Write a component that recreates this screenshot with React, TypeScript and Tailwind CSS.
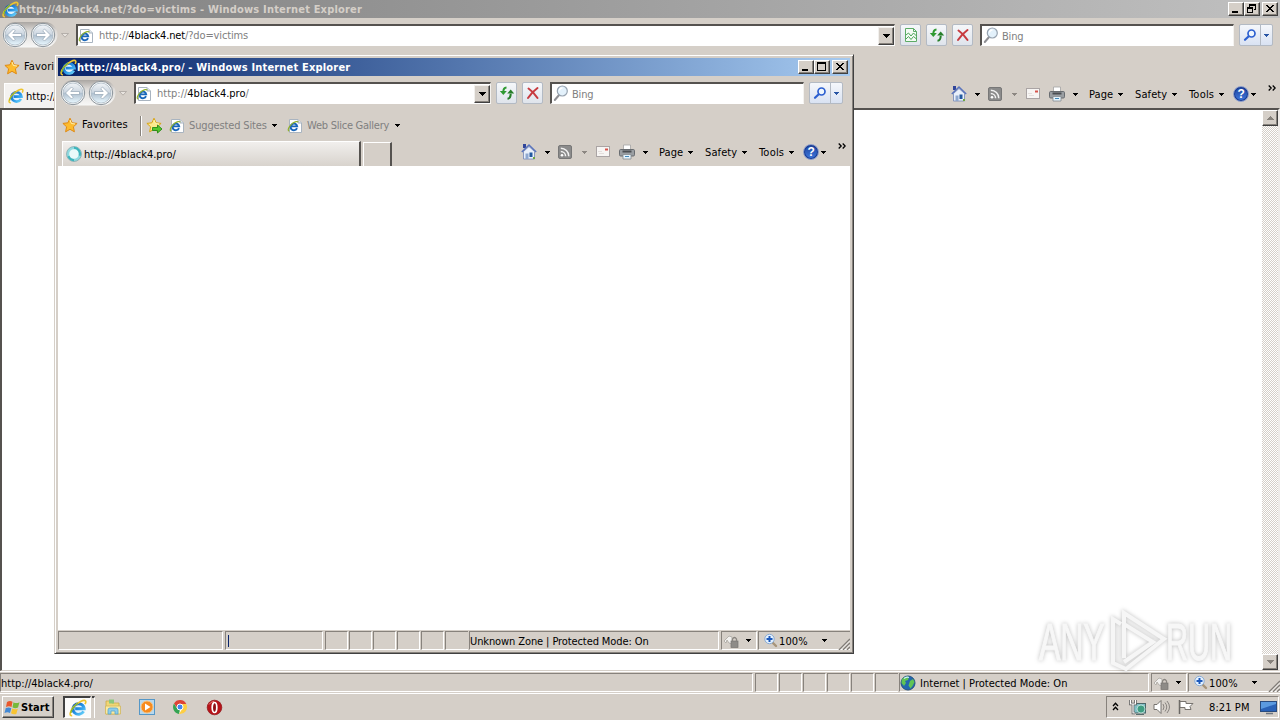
import React from 'react';

const Arrow = ({ className = 'text-black' }: { className?: string }) => (
  <svg width="5" height="3" viewBox="0 0 5 3" className={`shrink-0 ${className}`} shapeRendering="crispEdges">
    <path d="M0 0h5v1h-1v1h-1v1h-1v-1h-1v-1h-1z" fill="currentColor" />
  </svg>
);

const IeLogo = ({ size = 16 }: { size?: number }) => (
  <svg width={size} height={size} viewBox="0 0 16 16" className="shrink-0">
    <defs>
      <linearGradient id="ieBlue" x1="0" y1="0" x2="1" y2="1">
        <stop offset="0" stopColor="#1556ae" />
        <stop offset=".5" stopColor="#2592e6" />
        <stop offset="1" stopColor="#6ed6fb" />
      </linearGradient>
    </defs>
    <ellipse cx="8.500" cy="8.500" rx="4.500" ry="4.500" fill="#e4f3fc" />
    <path d="M13 11A5 4.700 0 1 1 13.500 8.600H5.500" fill="none" stroke="url(#ieBlue)" strokeWidth="2.600" />
    <path d="M2.800 14.800C.2 15.200 .4 11.500 4 7.200C7.800 2.900 13.500 .2 14.700 1.800C15.200 2.500 14.800 3.600 14.200 4.600" fill="none" stroke="#edc531" strokeWidth="1.500" />
    <path d="M1.800 12.500C1.800 10.200 4.600 6.200 7.800 3.700" fill="none" stroke="#6fb52c" strokeWidth="1" />
  </svg>
);

const IePage = () => (
  <svg width="16" height="16" viewBox="0 0 16 16" className="shrink-0">
    <path d="M2.500 1.500h8.500l3.500 3.500v9.500h-12z" fill="#fff" stroke="#a9b4c0" />
    <path d="M11 1.500V5h3.500" fill="#dfe6ee" stroke="#a9b4c0" />
    <path d="M10 10.200A3.300 3.300 0 1 1 10.200 8.400H4.500" fill="none" stroke="#1a67ba" strokeWidth="1.900" />
    <path d="M2.300 13C-.2 12.800 2 8.300 5.200 5.600C8 3.500 10.800 2.900 11.200 4.200" fill="none" stroke="#8fb02c" strokeWidth="1.200" />
  </svg>
);

const Star = ({ add = false }: { add?: boolean }) => (
  <svg width="17" height="17" viewBox="0 0 17 17" className="shrink-0">
    <path
      d="M8 1.200l2.100 4.600 5 .6-3.700 3.400 1 5L8 12.300l-4.400 2.500 1-5L.9 6.400l5-.6z"
      fill={add ? '#fbe98d' : '#fdbb2d'}
      stroke={add ? '#d9a514' : '#e08a12'}
      strokeWidth="1"
      strokeLinejoin="round"
    />
    <path d="M8 3l1.400 3.500 3.600.5" fill="none" stroke="#fff2b0" strokeWidth="1" />
    {add && <path d="M6.500 10.500h5v-2.500l4.500 4-4.500 4v-2.500h-5z" fill="#55c62d" stroke="#258a18" strokeWidth=".9" />}
  </svg>
);

const NavButtons = () => (
  <svg width="56" height="28" viewBox="0 0 56 28" className="shrink-0">
    <defs>
      <linearGradient id="navFill" x1="0" y1="0" x2="0" y2="1">
        <stop offset="0" stopColor="#f2f5f8" />
        <stop offset=".46" stopColor="#ccd6e0" />
        <stop offset=".52" stopColor="#b0c0cf" />
        <stop offset="1" stopColor="#e9f8ff" />
      </linearGradient>
      <linearGradient id="navRim" x1="0" y1="0" x2="0" y2="1">
        <stop offset="0" stopColor="#aaa6a2" />
        <stop offset=".35" stopColor="#dedbd8" />
        <stop offset="1" stopColor="#f8f8f7" />
      </linearGradient>
    </defs>
    <rect x=".5" y="1" width="55" height="25.500" rx="12.700" fill="url(#navRim)" />
    {[13, 41].map((cx) => (
      <g key={cx}>
        <circle cx={cx} cy="14" r="11.700" fill="#f8fafb" stroke="#7d878f" strokeWidth=".9" />
        <circle cx={cx} cy="14" r="10" fill="url(#navFill)" stroke="#a3b1bd" strokeWidth=".7" />
      </g>
    ))}
    <path d="M5.500 14l6-6 1.800 1.800-2.500 2.700h8.700v3h-8.700l2.500 2.700-1.800 1.800z" fill="#fff" stroke="#93a5b5" strokeWidth=".7" />
    <path d="M48.500 14l-6-6-1.800 1.800 2.500 2.700h-8.700v3h8.700l-2.500 2.700 1.800 1.800z" fill="#fff" stroke="#93a5b5" strokeWidth=".7" />
  </svg>
);

const Magnifier = ({ color }: { color: string }) => (
  <svg width="16" height="16" viewBox="0 0 16 16" className="shrink-0">
    <path d="M7 9L3 12.800" stroke={color} strokeWidth="2.200" strokeLinecap="round" />
    <circle cx="9.500" cy="6.500" r="3.500" fill="#eef6fd" stroke={color} strokeWidth="1.700" />
  </svg>
);

const SearchGlass = () => (
  <svg width="17" height="17" viewBox="0 0 17 17" className="shrink-0">
    <path d="M6.500 9.500L1.800 15" stroke="#8f8f94" strokeWidth="2" strokeLinecap="round" />
    <circle cx="9.300" cy="6" r="5" fill="#e3f1fb" stroke="#97a3b0" strokeWidth="1.200" />
    <path d="M6.500 5.500a3 3 0 0 1 3-2.500" stroke="#fff" strokeWidth="1.300" fill="none" />
  </svg>
);

const ToolButton = ({ children }: { children: React.ReactNode }) => (
  <div className="flex h-[22px] w-[21px] shrink-0 items-center justify-center rounded-[2px] border border-[#b3bac4] bg-gradient-to-b from-[#f5f7fa] to-[#dfe4ec]">
    {children}
  </div>
);

const CompatIcon = () => (
  <svg width="14" height="16" viewBox="0 0 14 16">
    <path d="M1.500 1.500h8l3 3v10h-11z" fill="#f4fbf4" stroke="#5cab66" />
    <path d="M9.500 1.500v3h3" fill="none" stroke="#5cab66" />
    <path d="M2 8l2.500-2 2.500 3 2.500-3 3 3M2 12l2.500-2.500 2.500 3 2.500-3 3 2.500" fill="none" stroke="#4ba458" />
  </svg>
);

const RefreshIcon = () => (
  <svg width="16" height="16" viewBox="0 0 16 16">
    <path d="M7.500 2.500Q4.300 2.800 4.300 7" fill="none" stroke="#2f9a32" strokeWidth="2" />
    <path d="M.8 6h7l-3.500 4z" fill="#2f9a32" />
    <path d="M8.500 13.800q3.200-.3 3.200-5" fill="none" stroke="#277f2a" strokeWidth="2" />
    <path d="M8.200 8.500h7l-3.500-4z" fill="#277f2a" />
  </svg>
);

const StopIcon = () => (
  <svg width="14" height="14" viewBox="0 0 14 14">
    <path d="M2.500 2.500q5 3.500 9 9.500M11.500 2q-5.500 4-9.500 10" fill="none" stroke="#c73a3f" strokeWidth="2" strokeLinecap="round" />
  </svg>
);

const HomeIcon = () => (
  <svg width="16" height="17" viewBox="0 0 16 17" className="mb-[1px] shrink-0">
    <path d="M2 1h3v4H2z" fill="#30459a" />
    <path d="M2.500 8.500L8 3.500l5.500 5v7.500h-11z" fill="#e9f0fa" stroke="#7285b5" strokeWidth=".8" />
    <path d="M.8 9L8 2l7.200 7" fill="none" stroke="#5a74bd" strokeWidth="1.500" />
    <path d="M4.500 10.500h3V16h-3z" fill="#8ea8d0" />
    <path d="M8.500 9.500h3V14h-3z" fill="#23599f" />
    <path d="M12 14h2v2h-2z" fill="#6ea73d" />
  </svg>
);

const RssIcon = () => (
  <svg width="14" height="14" viewBox="0 0 14 14" className="ml-2 shrink-0">
    <rect x=".5" y=".5" width="13" height="13" rx="1.500" fill="#8b8b8b" stroke="#777" />
    <circle cx="4" cy="10.200" r="1.300" fill="#fff" />
    <path d="M2.800 6.500a4.800 4.800 0 0 1 4.800 4.800M2.800 3.200a8 8 0 0 1 8 8" fill="none" stroke="#f2f2f2" strokeWidth="1.500" />
  </svg>
);

const MailIcon = () => (
  <svg width="14" height="11" viewBox="0 0 14 11" className="mb-[1px] shrink-0">
    <rect x=".5" y=".5" width="13" height="10" fill="#f7f5f3" stroke="#aaa4a4" />
    <path d="M9 2.500h3v2H9z" fill="#d6544c" />
    <path d="M2 5.500h4M3 7.500h5" stroke="#ddd8d6" strokeWidth=".8" />
  </svg>
);

const PrinterIcon = () => (
  <svg width="16" height="16" viewBox="0 0 16 16" className="shrink-0">
    <path d="M4.500 1h7v6h-7z" fill="#fff" stroke="#a3a3a3" strokeWidth=".8" />
    <rect x=".5" y="5.500" width="15" height="6.500" rx="1.200" fill="#9a9ea2" stroke="#686c70" />
    <path d="M3.500 6.500h9v2h-9z" fill="#4b4e52" />
    <path d="M4 10.500h8V15H4z" fill="#e5f3fc" stroke="#868b90" strokeWidth=".8" />
    <path d="M6 12.500h4" stroke="#4489b9" />
  </svg>
);

const HelpIcon = () => (
  <span className="flex h-4 w-4 shrink-0 items-center justify-center rounded-full border border-[#8b9cc8] bg-gradient-to-b from-[#1f459f] to-[#3f78dd] font-['Liberation_Sans'] text-xs leading-none font-bold text-white shadow-[inset_0_0_0_1px_#1b3c92]">
    ?
  </span>
);

const WindowButton = ({ kind }: { kind: 'min' | 'max' | 'restore' | 'close' }) => (
  <div className="flex h-[14px] w-4 shrink-0 items-center justify-center border border-t-white border-r-[#404040] border-b-[#404040] border-l-white bg-[#d5cfc8] shadow-[inset_-1px_-1px_0_#87827c]">
    <svg width="12" height="10" viewBox="0 0 12 10" shapeRendering="crispEdges" stroke="#000" fill="none">
      {kind === 'min' && <path d="M2 8h6" strokeWidth="2" />}
      {kind === 'max' && <path d="M1.500 8.500v-8h8v8zM1 1.500h9" />}
      {kind === 'restore' && <path d="M4 1h6M3.500 3V.5h6v5H8M1 4h6M1.500 8.500v-5h5v5z" />}
      {kind === 'close' && <path d="M2 1l7 7M3 1l7 7M9 1L2 8M10 1L3 8" strokeWidth="1" />}
    </svg>
  </div>
);

const MenuText = ({ label, className }: { label: string; className: string }) => (
  <div className={`flex shrink-0 items-center justify-between ${className}`}>
    <span>{label}</span>
    <Arrow />
  </div>
);

const CommandBar = () => (
  <div className="flex h-6 w-[329px] shrink-0 items-center">
    <HomeIcon />
    <Arrow className="ml-2 text-black" />
    <RssIcon />
    <Arrow className="ml-[10px] text-[#8c8782]" />
    <span className="w-[9px] shrink-0" />
    <MailIcon />
    <span className="w-[9px] shrink-0" />
    <PrinterIcon />
    <Arrow className="ml-2 text-black" />
    <MenuText label="Page" className="mt-[1px] ml-[11px] w-[34px] tracking-[0.05px]" />
    <MenuText label="Safety" className="mt-[1px] ml-3 w-[42px] tracking-[0.1px]" />
    <MenuText label="Tools" className="mt-[1px] ml-3 w-[35px] tracking-[0.2px]" />
    <span className="w-[9px] shrink-0" />
    <HelpIcon />
    <Arrow className="ml-[2px] text-black" />
    <svg width="8" height="6" viewBox="0 0 8 6" className="mb-3 ml-3 shrink-0">
      <path d="M.7.5l2.500 2.500L.7 5.500M4.700.5l2.500 2.500-2.500 2.500" fill="none" stroke="#000" strokeWidth="1.300" />
    </svg>
  </div>
);

interface ChromeProps {
  title: string;
  host: string;
  rest: string;
  active?: boolean;
}

const BrowserChrome: React.FC<ChromeProps> = ({ title, host, rest, active = false }) => (
  <div className="flex h-[108px] shrink-0 flex-col">
    <div
      className={`flex h-[18px] items-center pr-[2px] pl-[2px] ${
        active ? 'bg-gradient-to-r from-[#0a246a] to-[#a6caf0] text-white' : 'bg-gradient-to-r from-[#808080] to-[#c0c0c0] text-[#d5cfc8]'
      }`}
    >
      <IeLogo size={17} />
      <span className="mt-[1px] flex-1 text-[11px] font-bold tracking-[0.18px]">{title}</span>
      <WindowButton kind="min" />
      <WindowButton kind={active ? 'max' : 'restore'} />
      <span className="w-[2px]" />
      <WindowButton kind="close" />
    </div>

    <div className="flex h-[34px] items-center pr-[7px] pl-[2px]">
      <NavButtons />
      <svg width="8" height="5" viewBox="0 0 8 5" className="ml-[3px] shrink-0">
        <path d="M.5.5h7L4 4.200z" fill="#e8e4df" stroke="#aaa59f" strokeWidth=".8" />
      </svg>
      <div className="ml-[7px] flex h-[22px] min-w-0 flex-1 items-center border-t-2 border-r border-b border-l-2 border-t-[#55524f] border-r-[#f4f2ef] border-b-white border-l-[#55524f] bg-white">
        <IePage />
        <span className={`mt-[1px] ml-[5px] flex-1 text-[#808080] ${active ? 'tracking-[0px]' : 'tracking-[-0.14px]'}`}>
          http://<span className="text-black">{host}</span>{rest}
        </span>
        <div className="flex h-[18px] w-4 items-center justify-center border border-t-[#f2f0ed] border-r-[#404040] border-b-[#404040] border-l-[#f2f0ed] bg-[#d5cfc8] shadow-[inset_-1px_-1px_0_#87827c]">
          <svg width="7" height="4" viewBox="0 0 7 4" shapeRendering="crispEdges">
            <path d="M0 0h7v1H6v1H5v1H4v1H3V3H2V2H1V1H0z" />
          </svg>
        </div>
      </div>
      <div className="ml-[5px] flex shrink-0 gap-[5px]">
        {!active && <ToolButton><CompatIcon /></ToolButton>}
        <ToolButton><RefreshIcon /></ToolButton>
        <ToolButton><StopIcon /></ToolButton>
      </div>
      <div className="ml-[7px] flex h-[22px] w-[254px] shrink-0 items-center border-t-2 border-r border-b border-l-2 border-t-[#55524f] border-r-[#f4f2ef] border-b-white border-l-[#55524f] bg-white pl-[1px]">
        <SearchGlass />
        <span className="mt-[2px] ml-[2px] text-[#808080]">Bing</span>
      </div>
      <div className="ml-[5px] flex h-[22px] w-[34px] shrink-0 rounded-[2px] border border-[#b3bac4] bg-gradient-to-b from-[#f5f7fb] to-[#d9e2f2]">
        <div className="flex w-[21px] items-center justify-center border-r border-[#b3bac4]"><Magnifier color="#2c5fd0" /></div>
        <div className="flex flex-1 items-center justify-center"><Arrow className="text-[#2855a4]" /></div>
      </div>
    </div>

    <div className="flex h-[31px] items-center pl-1 text-[#808080]">
      <Star />
      <span className="mb-[2px] ml-[3px] w-[58px] shrink-0 tracking-[0.12px] text-black">Favorites</span>
      <span className="h-5 w-[2px] shrink-0 border-r border-l border-r-white border-l-[#87827c]" />
      <span className="w-1 shrink-0" />
      <Star add />
      {active && (
        <>
          <span className="w-[6px] shrink-0" />
          <IePage />
          <MenuText label="Suggested Sites" className="ml-[4px] w-[88px] tracking-[-0.14px]" />
          <span className="w-[10px] shrink-0" />
          <IePage />
          <MenuText label="Web Slice Gallery" className="ml-[4px] w-[93px] tracking-[-0.25px]" />
        </>
      )}
    </div>

    <div className="flex h-[25px] items-start justify-between pl-1">
      <div className="flex h-full">
        <div className={`flex h-full w-[299px] items-center border-t border-r-2 border-l border-t-white border-r-[#55524f] border-l-white pl-[3px] ${active ? 'bg-gradient-to-b from-[#f1efed] to-[#d8d3cd]' : 'bg-[#f4f2f0]'}`}>
          {active ? (
            <svg width="16" height="16" viewBox="0 0 16 16">
              <circle cx="8" cy="8" r="6.200" fill="#eafafa" stroke="#8fd9df" strokeWidth="2.800" />
              <circle cx="8" cy="8" r="7.500" fill="none" stroke="#7b9ba0" strokeWidth=".6" />
              <path d="M8 1.800a6.200 6.200 0 0 1 5.700 8M8 14.200a6.200 6.200 0 0 1-5.500-4" fill="none" stroke="#3db4bb" strokeWidth="2" />
            </svg>
          ) : (
            <IeLogo />
          )}
          <span className="mt-[1px] ml-[2px] tracking-[0px] text-black">http://{host}{rest}</span>
        </div>
        <div className="mt-[1px] ml-[2px] h-6 w-[29px] border-t border-r-2 border-l border-t-white border-r-[#55524f] border-l-white" />
      </div>
      <div className="-mt-[1px] flex"><CommandBar /></div>
    </div>
  </div>
);

const Panel = ({ className, children }: { className: string; children?: React.ReactNode }) => (
  <div className={`flex h-[19px] items-center border border-t-[#87827c] border-r-white border-b-white border-l-[#87827c] ${className}`}>{children}</div>
);

const StatusRight = ({ zone, globe = false }: { zone: string; globe?: boolean }) => (
  <>
    {[0, 1, 2, 3, 4].map((i) => <Panel key={i} className="w-[23px] shrink-0" />)}
    <div className="h-[19px] w-[23px] shrink-0 border border-r-0 border-t-[#87827c] border-b-white border-l-[#87827c]" />
    <Panel className="w-[250px] shrink-0">
      {globe && (
        <svg width="16" height="16" viewBox="0 0 16 16" className="mr-[4px]">
          <circle cx="8" cy="8" r="7" fill="#2367ae" stroke="#23517e" />
          <path d="M3 3q4-2.500 6-1l-1 3-3 1 1 2-2 3-2.500-3Q1 5 3 3zM10 6l3-2 1.500 3-2 4-2 2.500-2-3z" fill="#60c453" />
          <path d="M4 3.500q3-2 5-1" stroke="#c9efff" strokeWidth="1.200" fill="none" />
        </svg>
      )}
      <span className={`mt-[2px] ${globe ? 'tracking-[0.02px]' : 'tracking-[-0.1px]'}`}>{zone}</span>
    </Panel>
    <Panel className="ml-[1px] w-[36px] shrink-0 justify-between pr-[5px] pl-[1px]">
      <svg width="17" height="16" viewBox="0 0 17 16">
        <path d="M1 8l5-5 3 1v7l-3-1-2-3-1 3z" fill="#f1f0ee" stroke="#aaa6a0" strokeWidth=".8" />
        <rect x="8" y="8" width="7" height="6.500" fill="#8e8b87" stroke="#77736f" strokeWidth=".7" />
        <path d="M9.500 8V6q2-3 4 0v2" fill="none" stroke="#88847f" strokeWidth="1.300" />
      </svg>
      <Arrow />
    </Panel>
    <div className="flex h-[19px] w-[92px] shrink-0 items-center border-t border-b border-l border-t-[#87827c] border-b-white border-l-[#87827c] pl-[4px]">
      <svg width="16" height="16" viewBox="0 0 16 16">
        <path d="M9 9l4 4" stroke="#a79479" strokeWidth="2.400" strokeLinecap="round" />
        <circle cx="6.500" cy="6" r="4.700" fill="#e5f2ff" stroke="#88aad3" />
        <path d="M6.500 3v6M3.500 6h6" stroke="#1d59bb" strokeWidth="2" />
      </svg>
      <span className="mt-[2px] w-[43px] tracking-[0.1px]">100%</span>
      <Arrow />
      <svg width="12" height="12" viewBox="0 0 12 12" className="mt-[6px] ml-auto">
        <path d="M1 12L12 1M5 12l7-7M9 12l3-3" stroke="#817d78" strokeWidth="1.500" />
        <path d="M2.500 12L12 2.500M6.500 12L12 6.500M10.500 12l1.500-1.500" stroke="#fff" strokeWidth=".8" />
      </svg>
    </div>
  </>
);

const ScrollButton = ({ up = false }: { up?: boolean }) => (
  <div className="flex h-4 w-4 items-center justify-center border border-t-white border-r-[#404040] border-b-[#404040] border-l-white bg-[#d5cfc8] shadow-[inset_-1px_-1px_0_#87827c]">
    <svg width="7" height="4" viewBox="0 0 7 4" className={up ? 'rotate-180' : ''} shapeRendering="crispEdges">
      <path d="M0 0h7v1H6v1H5v1H4v1H3V3H2V2H1V1H0z" fill="#87827c" />
    </svg>
  </div>
);

const Watermark = () => (
  <svg width="216" height="72" viewBox="0 0 216 72" className="absolute top-[605px] left-[1034px] drop-shadow-[0_0_2px_rgba(0,0,0,0.26)]">
    <g fill="#f7f7f7" stroke="#f7f7f7" strokeWidth="1" fontFamily="'Liberation Sans', sans-serif" fontSize="51">
      <text transform="translate(5 54.500) scale(.63 1)">ANY</text>
      <text transform="translate(132 54.500) scale(.6 1)">RUN</text>
    </g>
    <path d="M90 8l41 25-39 30-12-6V14l9 5v34l32-20-33-20z" fill="#f4f4f4" fillOpacity=".25" />
    <path d="M90 19V8l40 26-38 30-13-6V14l8 5M90 53V19l29 18-29 20" fill="none" stroke="#f6f6f6" strokeWidth="4" />
  </svg>
);

const Taskbar = () => (
  <div className="flex h-[27px] shrink-0 items-center border-t border-white pr-[1px] pl-[2px]">
    <div className="flex h-[22px] w-[52px] shrink-0 items-center border border-t-white border-r-[#404040] border-b-[#404040] border-l-white pl-[1px] font-bold shadow-[inset_-1px_-1px_0_#87827c]">
      <svg width="17" height="17" viewBox="0 0 17 17" className="shrink-0">
        <path d="M3 3q3-2 5.500-.2L7.500 8Q5 6.500 2 8z" fill="#e9582c" />
        <path d="M9.500 3.200Q12 5 15.500 3.200L14 8.500Q11 10 8.500 8.300z" fill="#76b93c" />
        <path d="M1.800 9Q5 7.700 7.300 9.200L6 14Q3.500 12.500.5 14z" fill="#4389d5" />
        <path d="M8.300 9.500Q11 11 13.800 9.700L12.300 15Q9.500 16 7 14.300z" fill="#f8c331" />
      </svg>
      <span className="mt-[1px] tracking-[0.1px]">Start</span>
    </div>
    <div className="ml-[9px] flex h-[22px] w-[28px] shrink-0 items-center justify-center border-t-2 border-r border-b border-l-2 border-t-[#404040] border-r-white border-b-white border-l-[#404040] bg-[#fbfaf9]">
      <IeLogo size={18} />
    </div>
    <span className="ml-[1px] h-[22px] w-[3px] shrink-0 border-t-2 border-r border-t-[#404040] border-r-white" />
    <svg width="18" height="18" viewBox="0 0 18 18" className="ml-[9px] shrink-0">
      <path d="M2 3h5l1 2h7v11H2z" fill="#f1d675" stroke="#cba94a" strokeWidth=".8" />
      <path d="M5 1.500h5v4H5z" fill="#8bc87d" />
      <path d="M1.500 8h15v8h-15z" fill="#fae9a0" stroke="#d1b75e" strokeWidth=".8" />
      <path d="M4 16v-4q0-2 2-2h6q2 0 2 2v4h-3v-3H7v3z" fill="#8dccea" stroke="#58a6cf" strokeWidth=".8" />
    </svg>
    <svg width="18" height="18" viewBox="0 0 18 18" className="ml-4 shrink-0">
      <rect x="1.500" y="1.500" width="15" height="15" fill="#b8d8ed" stroke="#5597c7" />
      <circle cx="9" cy="9" r="6" fill="#f78b1e" stroke="#f9c27d" />
      <path d="M7 5.500l5.500 3.500L7 12.500z" fill="#fff" />
    </svg>
    <svg width="16" height="16" viewBox="0 0 16 16" className="ml-4 shrink-0">
      <circle cx="8" cy="8" r="6.500" fill="#fff" />
      <path d="M2 4.500a7 7 0 0 1 12.300.5H8L5 9z" fill="#dd4436" />
      <path d="M2 4.500L5.500 10 8 11l-1 4A7 7 0 0 1 2 4.500z" fill="#35a352" />
      <path d="M14.300 5A7 7 0 0 1 7 15l3.500-5.500L10 5z" fill="#fdce43" />
      <circle cx="8" cy="8" r="3" fill="#4386ee" stroke="#fff" strokeWidth="1" />
    </svg>
    <svg width="17" height="17" viewBox="0 0 17 17" className="ml-[18px] shrink-0">
      <circle cx="8.500" cy="8.500" r="7.300" fill="#b71319" stroke="#8e1115" strokeWidth=".7" />
      <ellipse cx="8.500" cy="8.500" rx="2.300" ry="5" fill="#8e1115" stroke="#fff" strokeWidth="1.700" />
      <path d="M3 5.500q2-3 5-3" stroke="#ef8d85" fill="none" />
    </svg>

    <div className="ml-auto flex h-[22px] w-[173px] items-center border border-t-[#87827c] border-r-white border-b-white border-l-[#87827c] pl-[5px]">
      <svg width="7" height="9" viewBox="0 0 7 9" className="mb-[2px]">
        <path d="M1 4l2.500-2.700L6 4M1 8l2.500-2.700L6 8" fill="none" stroke="#000" strokeWidth="1.300" />
      </svg>
      <svg width="18" height="17" viewBox="0 0 18 17" className="ml-[10px]">
        <rect x="4.500" y="4.500" width="12" height="9.500" fill="#80bfc6" stroke="#4b6769" />
        <path d="M7 15.500h8" stroke="#596d6e" />
        <circle cx="12" cy="10" r="4" fill="#3f9d82" stroke="#def4ef" strokeWidth=".7" />
        <path d="M1.500 1v4h5V1M4 5v9h2" fill="none" stroke="#555" strokeWidth="2.600" />
        <path d="M1.500 1v4h5V1M4 5v9h2" fill="none" stroke="#fff" strokeWidth="1.200" />
      </svg>
      <svg width="18" height="16" viewBox="0 0 18 16" className="ml-[6px]">
        <path d="M1 5.500h3l4-4v13l-4-4H1z" fill="#fff" stroke="#77736f" />
        <path d="M10 5q2 3 0 6M12 3.500q3.500 4.500 0 9M14 2q5 6 0 12" fill="none" stroke="#7f7b77" strokeWidth=".9" />
      </svg>
      <svg width="18" height="16" viewBox="0 0 18 16" className="ml-[6px]">
        <path d="M2.500 1v14" stroke="#6b6865" strokeWidth="1.500" />
        <path d="M3 2.500h6v2h7l-3 3 1 3H8v-2H3z" fill="#fff" stroke="#77736f" />
      </svg>
      <span className="mt-[1px] ml-[14px] w-[42px] shrink-0 tracking-[0.1px] whitespace-nowrap">8:21 PM</span>
      <svg width="17" height="15" viewBox="0 0 17 15" className="ml-[9px] shrink-0">
        <rect x=".5" y="1.500" width="16" height="10" fill="#2a62b7" stroke="#294b7e" />
        <path d="M1 2h15v2L1 9z" fill="#5b9ae0" />
        <path d="M6 13.500h7" stroke="#6d7480" strokeWidth="1.500" />
      </svg>
    </div>
  </div>
);

export default function App() {
  return (
    <div className="relative flex h-[720px] w-[1280px] flex-col overflow-hidden bg-[#d5cfc8] font-['DejaVu_Sans_Condensed','DejaVu_Sans',sans-serif] text-[11px] leading-[14px] tracking-[-0.2px] whitespace-nowrap text-black">
      <BrowserChrome title="http://4black4.net/?do=victims - Windows Internet Explorer" host="4black4.net" rest="/?do=victims" />
      <div className="flex min-h-0 flex-1 border-t-2 border-r-2 border-b border-l-2 border-t-[#55524f] border-r-[#eeebe8] border-b-[#d5cfc8] border-l-[#55524f] bg-white">
        <div className="flex-1" />
        <div className="flex w-4 flex-col justify-between bg-[repeating-conic-gradient(#d5cfc8_0_25%,#ffffff_0_50%)] bg-[length:2px_2px]">
          <ScrollButton up />
          <ScrollButton />
        </div>
      </div>
      <div className="flex h-[22px] shrink-0 items-end gap-[1px] border-t border-white pb-[1px]">
        <Panel className="mr-[1px] min-w-0 flex-1"><span className="mt-[2px] tracking-[0px]">http://4black4.pro/</span></Panel>
        <StatusRight zone="Internet | Protected Mode: On" globe />
      </div>
      <Taskbar />

      <div className="absolute top-[54px] left-[54px] flex h-[600px] w-[800px] flex-col border border-t-[#d5cfc8] border-r-[#404040] border-b-[#404040] border-l-[#d5cfc8] bg-[#d5cfc8] p-[3px] shadow-[inset_1px_1px_0_#ffffff,inset_-1px_-1px_0_#87827c]">
        <BrowserChrome title="http://4black4.pro/ - Windows Internet Explorer" host="4black4.pro" rest="/" active />
        <div className="flex-1 bg-white" />
        <div className="flex h-5 shrink-0 items-end gap-[1px]">
          <Panel className="mr-[1px] min-w-0 flex-1" />
          <Panel className="mr-[1px] w-[98px] shrink-0 pl-[2px]"><span className="h-3 w-[1px] bg-[#0a246a]" /></Panel>
          <StatusRight zone="Unknown Zone | Protected Mode: On" />
        </div>
      </div>
      <Watermark />
    </div>
  );
}
